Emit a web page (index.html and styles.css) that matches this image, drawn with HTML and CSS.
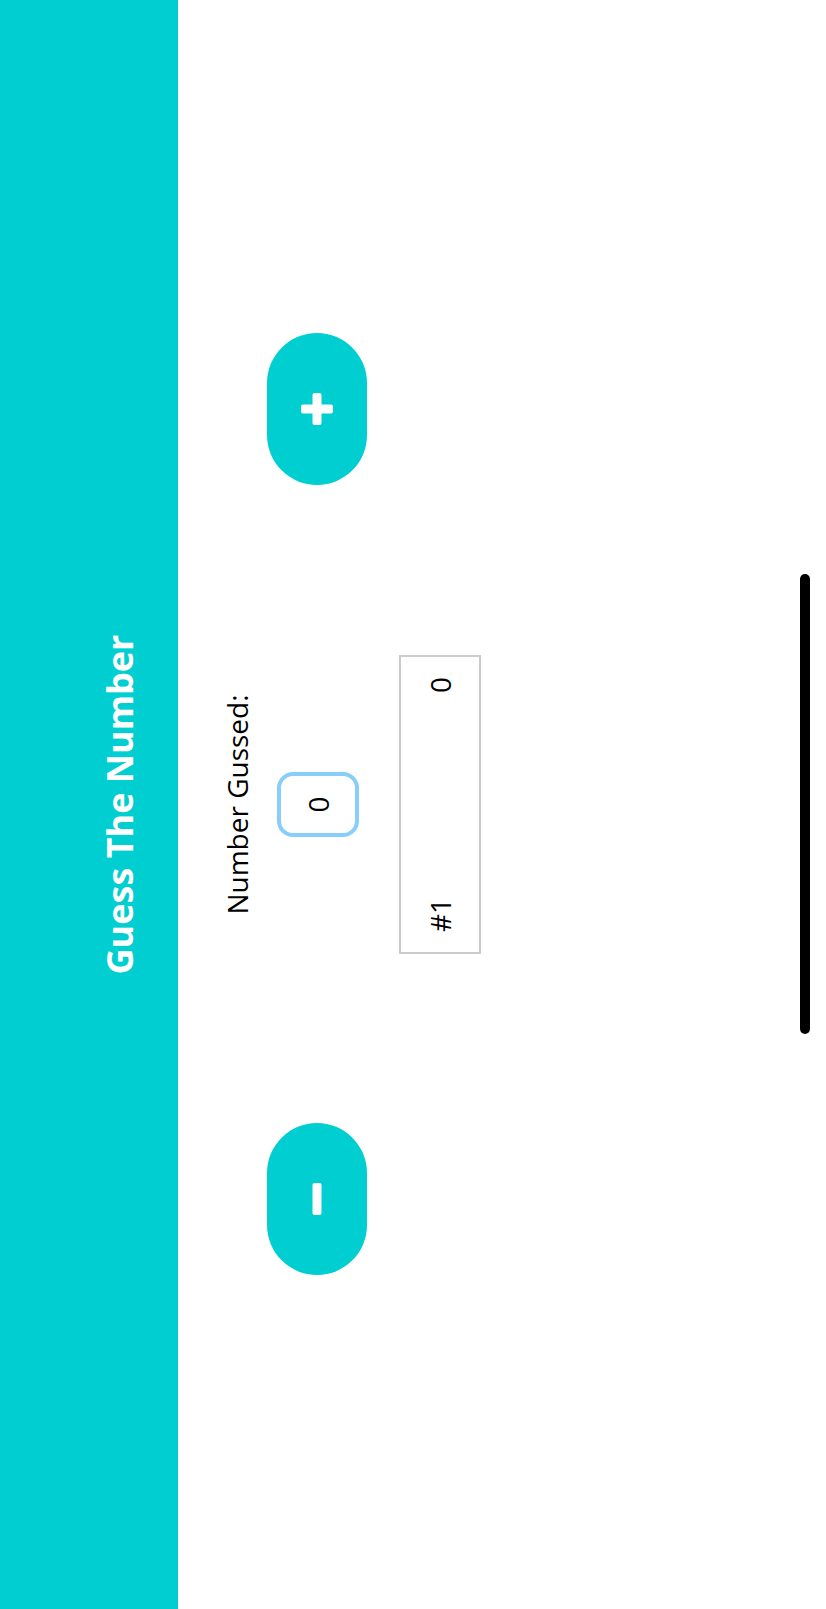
FILE: index.html
```html
<!DOCTYPE html>
<html>
<head>
<meta charset="utf-8">
<link rel="stylesheet" href="styles.css">
</head>
<body>
<div class="frame">
<div class="screen">
  <header class="header"><h1 class="title">Guess The Number</h1></header>
  <div class="controls">
    <button class="pill" aria-label="minus">
      <svg width="32" height="32" viewBox="0 0 32 32"><rect x="0" y="11.5" width="32" height="9" rx="2" fill="#fff"/></svg>
    </button>
    <div class="center">
      <div class="label">Number Gussed:</div>
      <div class="guess">0</div>
    </div>
    <button class="pill" aria-label="plus">
      <svg width="32" height="32" viewBox="0 0 32 32"><rect x="0" y="11.5" width="32" height="9" rx="2" fill="#fff"/><rect x="11.5" y="0" width="9" height="32" rx="2" fill="#fff"/></svg>
    </button>
  </div>
  <ul class="list">
    <li class="item"><span>#1</span><span>0</span></li>
  </ul>
  <div class="spacer"></div>
  <div class="home"></div>
</div>
</div>
</body>
</html>
```
FILE: styles.css
```css
html, body {
  margin: 0;
  padding: 0;
  overflow: hidden;
  background: #fff;
}
body {
  width: 826px;
  height: 1609px;
  font-family: "Open Sans", "DejaVu Sans", sans-serif;
  color: #000;
}
.frame {
  width: 826px;
  height: 1609px;
  overflow: hidden;
}
.screen {
  width: 1609px;
  height: 826px;
  transform-origin: 0 0;
  transform: translateY(1609px) rotate(-90deg);
  display: flex;
  flex-direction: column;
  align-items: center;
  background: #fff;
}
.header {
  width: 100%;
  height: 178px;
  background: #00ced1;
  box-sizing: border-box;
  padding-top: 95px;
  text-align: center;
}
.title {
  margin: 0;
  font-size: 36px;
  line-height: 49px;
  font-weight: 700;
  color: #fff;
}
.controls {
  margin-top: 40px;
  display: grid;
  grid-template-columns: 152px 638px 152px;
  align-items: start;
}
.pill {
  margin-top: 49px;
  width: 152px;
  height: 100px;
  border: none;
  border-radius: 50px;
  background: #00ced1;
  padding: 0;
  display: flex;
  align-items: center;
  justify-content: center;
}
.center {
  display: flex;
  flex-direction: column;
  align-items: center;
}
.label {
  font-size: 28px;
  line-height: 38px;
}
.guess {
  margin-top: 21px;
  width: 65px;
  height: 82px;
  box-sizing: border-box;
  border: 4px solid #87cefa;
  border-radius: 16px;
  display: flex;
  align-items: center;
  justify-content: center;
  font-size: 28px;
}
.list {
  list-style: none;
  margin: 32px 0 0;
  padding: 0;
}
.item {
  width: 299px;
  height: 82px;
  box-sizing: border-box;
  border: 2px solid #cccccc;
  padding: 0 20px;
  display: flex;
  align-items: center;
  justify-content: space-between;
  font-size: 28px;
}
.spacer {
  flex: 1;
}
.home {
  width: 460px;
  height: 10px;
  border-radius: 5px;
  background: #000;
  margin-bottom: 16px;
}
```
